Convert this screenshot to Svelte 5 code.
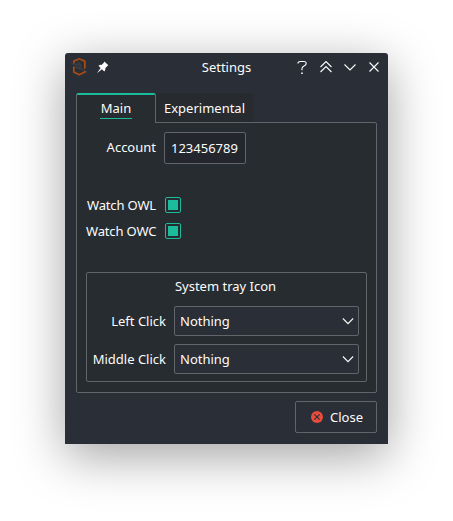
<script>
  let account = $state('123456789');
  const watches = [{ label: 'Watch OWL' }, { label: 'Watch OWC' }];
  const clicks = ['Left Click', 'Middle Click'];
</script>

<main>
  <div class="window">
    <header>
      <svg class="app" width="18" height="20" viewBox="0 0 18 20" fill="none">
        <path d="M0 6.7l3.500.4 4 .4-3 3 5.500 1.700M6.500 4.500l3.500 4-2 2 5 2.500 3.500 2.500" stroke="#3a3f45" stroke-width="1.300" />
        <path d="M2.800 6.500V4.100L8.300 1.800l5.500 2.300v7.400M2.800 9.500v5.500l5.500 2.800 5.500-2.800v-1" stroke="#aa4c12" stroke-width="1.700" />
      </svg>
      <svg class="pin" width="13" height="13" viewBox="0 0 13 13">
        <path d="M8.300.4 12.400 4.300 11.400 5.100 9.300 7.200C9.500 8.500 9.200 9.600 8.300 10.400L5.900 8.200.9 12.200 4.600 6.900 2.500 4.700C3.400 4 4.400 3.700 5.500 3.900L7.800 1.700z" />
      </svg>
      <span class="title">Settings</span>
      <div class="controls">
        <svg width="18" height="18" viewBox="0 0 18 18"><path d="M4.900 5.600C4.900 4.200 5.800 3.500 7.200 3.500h3.700c1.500 0 2.300.8 2.300 2 0 1.300-.8 1.900-2.200 2.500C9.500 8.700 9 9.500 9 10.500V12.300" /><path d="M8.200 15.300h1.600" stroke-width="1.6" /></svg>
        <svg width="18" height="18" viewBox="0 0 18 18"><path d="M3.500 9 9 3.500 14.500 9M3.500 14 9 8.500 14.500 14" /></svg>
        <svg width="18" height="18" viewBox="0 0 18 18"><path d="M3.500 6.500 9 12l5.500-5.500" /></svg>
        <svg width="18" height="18" viewBox="0 0 18 18"><path d="m4.500 4.500 9 9m0-9-9 9" /></svg>
      </div>
    </header>

    <nav>
      <button class="tab active"><span>Main</span></button>
      <button class="tab">Experimental</button>
    </nav>

    <section class="pane">
      <div class="row account">
        <label for="account">Account</label>
        <input id="account" bind:value={account} />
      </div>
      {#each watches as w}
        <div class="row watch">
          <span class="label">{w.label}</span>
          <span class="check" role="checkbox" aria-checked="true" aria-label={w.label} tabindex="0"></span>
        </div>
      {/each}
      <div class="group">
        <div class="heading">System tray Icon</div>
        {#each clicks as c}
          <div class="row click">
            <span class="label">{c}</span>
            <button class="select">
              <span>Nothing</span>
              <svg width="12" height="8" viewBox="0 0 12 8"><path d="M.9 1.500 6 6.600 11.100 1.500" /></svg>
            </button>
          </div>
        {/each}
      </div>
    </section>

    <footer>
      <button class="close">
        <svg width="12" height="12" viewBox="0 0 12 12"><circle cx="6" cy="6" r="6" fill="#e74c3c" /><path d="m3.300 3.300 5.400 5.400m0-5.400L3.300 8.700" stroke="#2a2e36" stroke-width="1.1" /></svg>
        <span>Close</span>
      </button>
    </footer>
  </div>
</main>

<style>
  main {
    box-sizing: border-box;
    width: 453px;
    height: 521px;
    padding: 53px 65px 77px;
    background: #fff;
    overflow: hidden;
    font: 13px/18px "Noto Sans", sans-serif;
    color: #fcfcfc;
  }
  .window {
    box-sizing: border-box;
    height: 391px;
    padding: 0 11px;
    background: #2a2e36;
    border-radius: 3px 3px 0 0;
    box-shadow: 0 12px 50px rgba(0, 0, 0, 0.37);
  }
  button, input {
    box-sizing: border-box;
    margin: 0;
    padding: 0;
    font: inherit;
    color: inherit;
    border: 1px solid #616569;
    border-radius: 2px;
    background: #2a2e36;
    outline: none;
  }
  svg { display: block; flex: none; fill: none; }
  header {
    display: flex;
    align-items: center;
    height: 28px;
    margin: 0 -6px 12px -7px;
  }
  .app { margin-left: 2px; }
  .pin { margin-left: 7px; fill: #fcfcfc; }
  .title { flex: 1; padding-left: 51px; text-align: center; }
  .controls { display: flex; gap: 6px; }
  .controls svg { stroke: #fcfcfc; stroke-width: 1.1; }
  nav { display: flex; height: 29px; }
  .tab {
    width: 97px;
    height: 29px;
    border: 0;
    border-radius: 0 2px 0 0;
    background: #272b2f;
  }
  .tab.active {
    position: relative;
    z-index: 1;
    width: 80px;
    height: 30px;
    border: solid #616569;
    border-width: 0 1px;
    border-radius: 2px 2px 0 0;
    background: linear-gradient(#1abc9c 2px, #272c30 2px);
  }
  .tab.active span {
    display: block;
    box-sizing: border-box;
    width: 32px;
    height: 21px;
    margin: 1px auto 0;
    padding-top: 1px;
    border-bottom: 1px solid #1abc9c;
  }
  .pane {
    box-sizing: border-box;
    height: 271px;
    padding: 9px;
    border: 1px solid #616569;
    border-radius: 0 2px 2px 2px;
    background: #272c30;
  }
  .row { display: flex; }
  label, .label { text-align: right; white-space: nowrap; }
  .account { height: 32px; margin-bottom: 33px; }
  .account label { width: 70px; margin-right: 8px; line-height: 31px; }
  .account input { width: 82px; height: 32px; padding-left: 6px; background: #23262d; }
  .watch { height: 16px; margin-bottom: 10px; line-height: 16px; }
  .watch .label { width: 70px; margin-right: 9px; letter-spacing: -0.15px; }
  .check {
    box-sizing: border-box;
    width: 16px;
    height: 16px;
    padding: 2px;
    border: 1px solid #1abc9c;
    border-radius: 2px;
    background: #1abc9c content-box;
  }
  .group {
    box-sizing: border-box;
    height: 110px;
    margin-top: 33px;
    padding: 4px 7px 0 5px;
    border: 1px solid #616569;
    border-radius: 2px;
  }
  .heading { text-align: center; height: 29px; }
  .click { height: 30px; margin-bottom: 8px; line-height: 30px; }
  .click .label { width: 74px; margin-right: 8px; }
  .select {
    display: flex;
    flex: 1;
    align-items: center;
    justify-content: space-between;
    padding: 0 4px 0 5px;
  }
  .select svg { stroke: #fcfcfc; stroke-width: 1.1; }
  footer { display: flex; justify-content: flex-end; margin-top: 8px; }
  .close {
    display: flex;
    align-items: center;
    gap: 7px;
    width: 82px;
    height: 32px;
    padding-left: 15px;
  }
</style>
